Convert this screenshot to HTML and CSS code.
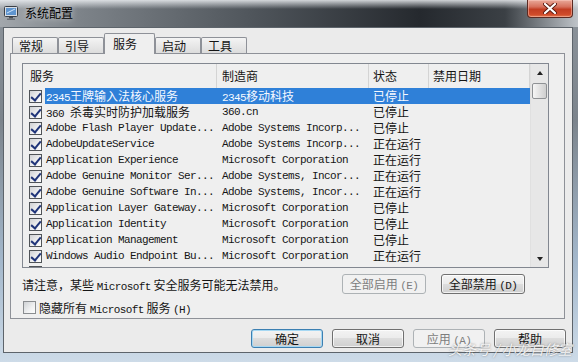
FILE: index.html
```html
<!DOCTYPE html>
<html lang="zh-CN">
<head>
    <meta charset="UTF-8">
    <title>系统配置</title>
    <link rel="stylesheet" href="styles.css">
</head>
<body>
    <div class="window">
        <div class="titlebar">
            <svg class="app-icon" width="14" height="14" viewBox="0 0 14 14">
                <rect x="0.5" y="0.5" width="13" height="10" rx="1" fill="#d9dee4" stroke="#3a3f46"/>
                <rect x="2" y="2" width="10" height="7" fill="#5f95cf"/>
                <path d="M3 7 L11 3" stroke="#cfe4fa" stroke-width="1"/>
                <rect x="5" y="11" width="4" height="1.5" fill="#4a4f56"/>
                <rect x="3" y="12.5" width="8" height="1.5" fill="#6b7077"/>
            </svg>
            <span class="title">系统配置</span>
            <div class="close">
                <svg width="14" height="11" viewBox="0 0 14 11">
                    <path d="M2 1 L12 10 M12 1 L2 10" stroke="#5a1a10" stroke-width="4" stroke-linecap="round"/>
                    <path d="M2 1 L12 10 M12 1 L2 10" stroke="#ffffff" stroke-width="2.2" stroke-linecap="round"/>
                </svg>
            </div>
        </div>

        <div class="client">
            <div class="tabs">
                <div class="tab">常规</div>
                <div class="tab">引导</div>
                <div class="tab active">服务</div>
                <div class="tab">启动</div>
                <div class="tab">工具</div>
            </div>

            <div class="panel">
                <div class="listview">
                    <div class="lv-main">
                        <div class="lv-head">
                            <div class="col h-name">服务</div>
                            <div class="col h-mfr">制造商</div>
                            <div class="col h-state">状态</div>
                            <div class="col h-date">禁用日期</div>
                        </div>

                        <div class="row selected">
                            <div class="cb"><span class="chk on"></span></div>
                            <div class="name">2345<span class="zh">王牌输入法核心服务</span></div>
                            <div class="mfr">2345<span class="zh">移动科技</span></div>
                            <div class="state">已停止</div>
                            <div class="date"></div>
                        </div>
                        <div class="row">
                            <div class="cb"><span class="chk on"></span></div>
                            <div class="name">360 <span class="zh">杀毒实时防护加载服务</span></div>
                            <div class="mfr">360.cn</div>
                            <div class="state">已停止</div>
                            <div class="date"></div>
                        </div>
                        <div class="row">
                            <div class="cb"><span class="chk on"></span></div>
                            <div class="name">Adobe Flash Player Update...</div>
                            <div class="mfr">Adobe Systems Incorp...</div>
                            <div class="state">已停止</div>
                            <div class="date"></div>
                        </div>
                        <div class="row">
                            <div class="cb"><span class="chk on"></span></div>
                            <div class="name">AdobeUpdateService</div>
                            <div class="mfr">Adobe Systems Incorp...</div>
                            <div class="state">正在运行</div>
                            <div class="date"></div>
                        </div>
                        <div class="row">
                            <div class="cb"><span class="chk on"></span></div>
                            <div class="name">Application Experience</div>
                            <div class="mfr">Microsoft Corporation</div>
                            <div class="state">正在运行</div>
                            <div class="date"></div>
                        </div>
                        <div class="row">
                            <div class="cb"><span class="chk on"></span></div>
                            <div class="name">Adobe Genuine Monitor Ser...</div>
                            <div class="mfr">Adobe Systems, Incor...</div>
                            <div class="state">正在运行</div>
                            <div class="date"></div>
                        </div>
                        <div class="row">
                            <div class="cb"><span class="chk on"></span></div>
                            <div class="name">Adobe Genuine Software In...</div>
                            <div class="mfr">Adobe Systems, Incor...</div>
                            <div class="state">正在运行</div>
                            <div class="date"></div>
                        </div>
                        <div class="row">
                            <div class="cb"><span class="chk on"></span></div>
                            <div class="name">Application Layer Gateway...</div>
                            <div class="mfr">Microsoft Corporation</div>
                            <div class="state">已停止</div>
                            <div class="date"></div>
                        </div>
                        <div class="row">
                            <div class="cb"><span class="chk on"></span></div>
                            <div class="name">Application Identity</div>
                            <div class="mfr">Microsoft Corporation</div>
                            <div class="state">已停止</div>
                            <div class="date"></div>
                        </div>
                        <div class="row">
                            <div class="cb"><span class="chk on"></span></div>
                            <div class="name">Application Management</div>
                            <div class="mfr">Microsoft Corporation</div>
                            <div class="state">已停止</div>
                            <div class="date"></div>
                        </div>
                        <div class="row">
                            <div class="cb"><span class="chk on"></span></div>
                            <div class="name">Windows Audio Endpoint Bu...</div>
                            <div class="mfr">Microsoft Corporation</div>
                            <div class="state">正在运行</div>
                            <div class="date"></div>
                        </div>
                        <div class="row">
                            <div class="cb"><span class="chk on"></span></div>
                        </div>
                    </div>

                    <div class="scroll">
                        <div class="sb-btn"><span class="arrow up"></span></div>
                        <div class="thumb"></div>
                        <div class="sb-track"></div>
                        <div class="sb-btn"><span class="arrow down"></span></div>
                    </div>
                </div>

                <div class="actions">
                    <div class="note">请注意，某些 <span class="en">Microsoft</span> 安全服务可能无法禁用。</div>
                    <div class="btn wide disabled">全部启用 <span class="en">(E)</span></div>
                    <div class="btn wide">全部禁用 <span class="en">(D)</span></div>
                </div>

                <div class="hide-row">
                    <span class="chk"></span>
                    <span class="hide-label">隐藏所有 <span class="en">Microsoft</span> 服务 <span class="en">(H)</span></span>
                </div>
            </div>

            <div class="footer">
                <div class="btn default">确定</div>
                <div class="btn">取消</div>
                <div class="btn disabled">应用 <span class="en">(A)</span></div>
                <div class="btn">帮助</div>
            </div>
        </div>

        <div class="watermark">头条号 / 小龙自修室</div>
    </div>
</body>
</html>
```

FILE: styles.css
```css
* {
    box-sizing: border-box;
}

body {
    margin: 0;
    width: 578px;
    height: 362px;
    overflow: hidden;
    font-family: "Noto Sans CJK SC", sans-serif;
    font-size: 12px;
    color: #151515;
    background: linear-gradient(180deg, #8d949b 0, #7c848c 120px, #a3b7cb 260px, #cddbe8 100%);
}

.window {
    position: relative;
    height: 362px;
}

/* title bar (aero glass) */
.titlebar {
    height: 27px;
    display: flex;
    align-items: flex-start;
    padding-left: 4px;
    background:
        linear-gradient(180deg, rgba(236, 239, 242, 0.85) 0, rgba(236, 239, 242, 0) 9px),
        linear-gradient(90deg, #a2a7ac 0, #7d8389 80px, #50565c 250px, #25292e 420px, #3b4045 505px, #bfc4c9 578px);
}

.app-icon {
    margin-top: 6px;
}

.title {
    margin-left: 7px;
    margin-top: 5px;
    line-height: 16px;
    color: #000;
    text-shadow: 0 0 6px rgba(255, 255, 255, 0.7);
}

.close {
    margin-left: auto;
    margin-right: 5px;
    width: 46px;
    height: 18px;
    display: flex;
    align-items: center;
    justify-content: center;
    border: 1px solid #5b2a22;
    border-top: none;
    border-radius: 0 0 4px 4px;
    background: linear-gradient(180deg, #e9a999 0, #d6705c 40%, #c23d22 55%, #cf4b2a 85%, #e2774f 100%);
    box-shadow: inset 0 0 0 1px rgba(255, 210, 200, 0.45);
}

/* window client area */
.client {
    margin: 0 5px 0 3px;
    height: 326px;
    border: 1px solid #5d646b;
    background: #ebebeb;
    padding: 5px 7px 0 6px;
}

.tabs {
    height: 20px;
    display: flex;
    align-items: flex-end;
    padding-left: 2px;
}

.tab {
    width: 46px;
    height: 16px;
    padding-left: 6px;
    line-height: 15px;
    border: 1px solid #8e9198;
    border-bottom: none;
    border-radius: 2px 2px 0 0;
    background: linear-gradient(180deg, #f4f4f4 0, #e8e8e8 50%, #dcdcdc 100%);
}

.tab.active {
    position: relative;
    width: 51px;
    height: 21px;
    margin-bottom: -1px;
    padding-left: 8px;
    padding-top: 3px;
    line-height: 14px;
    background: #efefef;
}

.panel {
    height: 266px;
    border: 1px solid #8e9198;
    background: #efefef;
    padding: 9px 0 0 11px;
}

/* services list */
.listview {
    width: 527px;
    height: 205px;
    display: flex;
    border: 1px solid #828790;
    background: #efefef;
}

.lv-main {
    width: 507px;
    overflow: hidden;
}

.lv-head {
    display: flex;
    height: 24px;
    line-height: 23px;
}

.lv-head .col {
    border-right: 1px solid #d4d4d4;
}

.h-name { width: 194px; padding-left: 7px; }
.h-mfr { width: 152px; padding-left: 5px; }
.h-state { width: 60px; padding-left: 4px; }
.h-date { width: 101px; padding-left: 4px; }

.row {
    display: flex;
    height: 16px;
    line-height: 16px;
    white-space: nowrap;
    font-family: "Liberation Mono", monospace;
    font-size: 11px;
    letter-spacing: -0.6px;
}

.row .cb {
    width: 22px;
    padding-left: 6px;
    padding-top: 2px;
}

.row .name { width: 172px; padding-left: 1px; overflow: hidden; }
.row .mfr { width: 152px; padding-left: 5px; overflow: hidden; }
.row .state {
    width: 60px;
    padding-left: 4px;
    font-family: "Noto Sans CJK SC", sans-serif;
    font-size: 12px;
    letter-spacing: 0;
}
.row .date { width: 101px; }

.zh {
    font-family: "Noto Sans CJK SC", sans-serif;
    font-size: 12px;
    letter-spacing: 0;
}

.en {
    font-family: "Liberation Mono", monospace;
    font-size: 11px;
    letter-spacing: -0.6px;
}

.row.selected .name,
.row.selected .mfr,
.row.selected .state,
.row.selected .date {
    background: #2f80d8;
    color: #f4f8ff;
}

.chk {
    display: inline-block;
    position: relative;
    width: 13px;
    height: 13px;
    border: 1px solid #505458;
    background: linear-gradient(135deg, #cfd1d4 0, #f0f1f2 60%, #fdfdfd 100%);
    vertical-align: top;
}

.chk.on::after {
    content: "";
    position: absolute;
    left: 3px;
    top: 0;
    width: 4px;
    height: 8px;
    border-right: 2px solid #1f3479;
    border-bottom: 2px solid #1f3479;
    transform: rotate(40deg);
}

.scroll {
    width: 18px;
    display: flex;
    flex-direction: column;
    background: #e7e7e7;
    border-left: 1px solid #e0e0e0;
}

.sb-btn {
    height: 17px;
    display: flex;
    align-items: center;
    justify-content: center;
}

.arrow {
    width: 0;
    height: 0;
    border-left: 3px solid transparent;
    border-right: 3px solid transparent;
}

.arrow.up { border-bottom: 4px solid #222; }
.arrow.down { border-top: 4px solid #222; }

.thumb {
    height: 16px;
    margin: 2px 1px 0;
    border: 1px solid #8f9295;
    border-radius: 2px;
    background: linear-gradient(90deg, #f6f6f6 0, #e2e2e2 50%, #cfcfcf 100%);
}

.sb-track {
    flex: 1;
}

/* below the list */
.actions {
    display: flex;
    align-items: center;
    width: 527px;
    height: 20px;
    margin-top: 6px;
    padding-right: 24px;
}

.note {
    flex: 1;
}

.btn {
    width: 72px;
    height: 19px;
    line-height: 17px;
    text-align: center;
    border: 1px solid #707070;
    border-radius: 3px;
    background: linear-gradient(180deg, #f3f3f3 0, #ebebeb 50%, #dddddd 50%, #cfcfcf 100%);
    box-shadow: inset 0 0 0 1px rgba(255, 255, 255, 0.7);
    white-space: nowrap;
}

.btn.wide {
    width: 84px;
    height: 20px;
    line-height: 18px;
    margin-left: 15px;
}

.btn.disabled {
    border-color: #adb2b5;
    background: #f1f1f1;
    color: #7d7d7d;
    box-shadow: none;
}

.btn.default {
    border-color: #3c7fb1;
    box-shadow: inset 0 0 0 1px #a6d8f3;
}

.hide-row {
    display: flex;
    align-items: center;
    margin-top: 7px;
    padding-left: 1px;
    height: 13px;
}

.hide-row .chk {
    border-color: #8a8d90;
}

.hide-label {
    margin-left: 3px;
}

.footer {
    display: flex;
    justify-content: flex-end;
    gap: 9px;
    margin-top: 10px;
    margin-right: -1px;
}

.watermark {
    position: absolute;
    left: 448px;
    top: 339px;
    font-size: 14px;
    font-style: italic;
    color: rgba(255, 255, 255, 0.88);
    text-shadow: 0 0 2px rgba(60, 60, 60, 0.6);
    white-space: nowrap;
}
```
